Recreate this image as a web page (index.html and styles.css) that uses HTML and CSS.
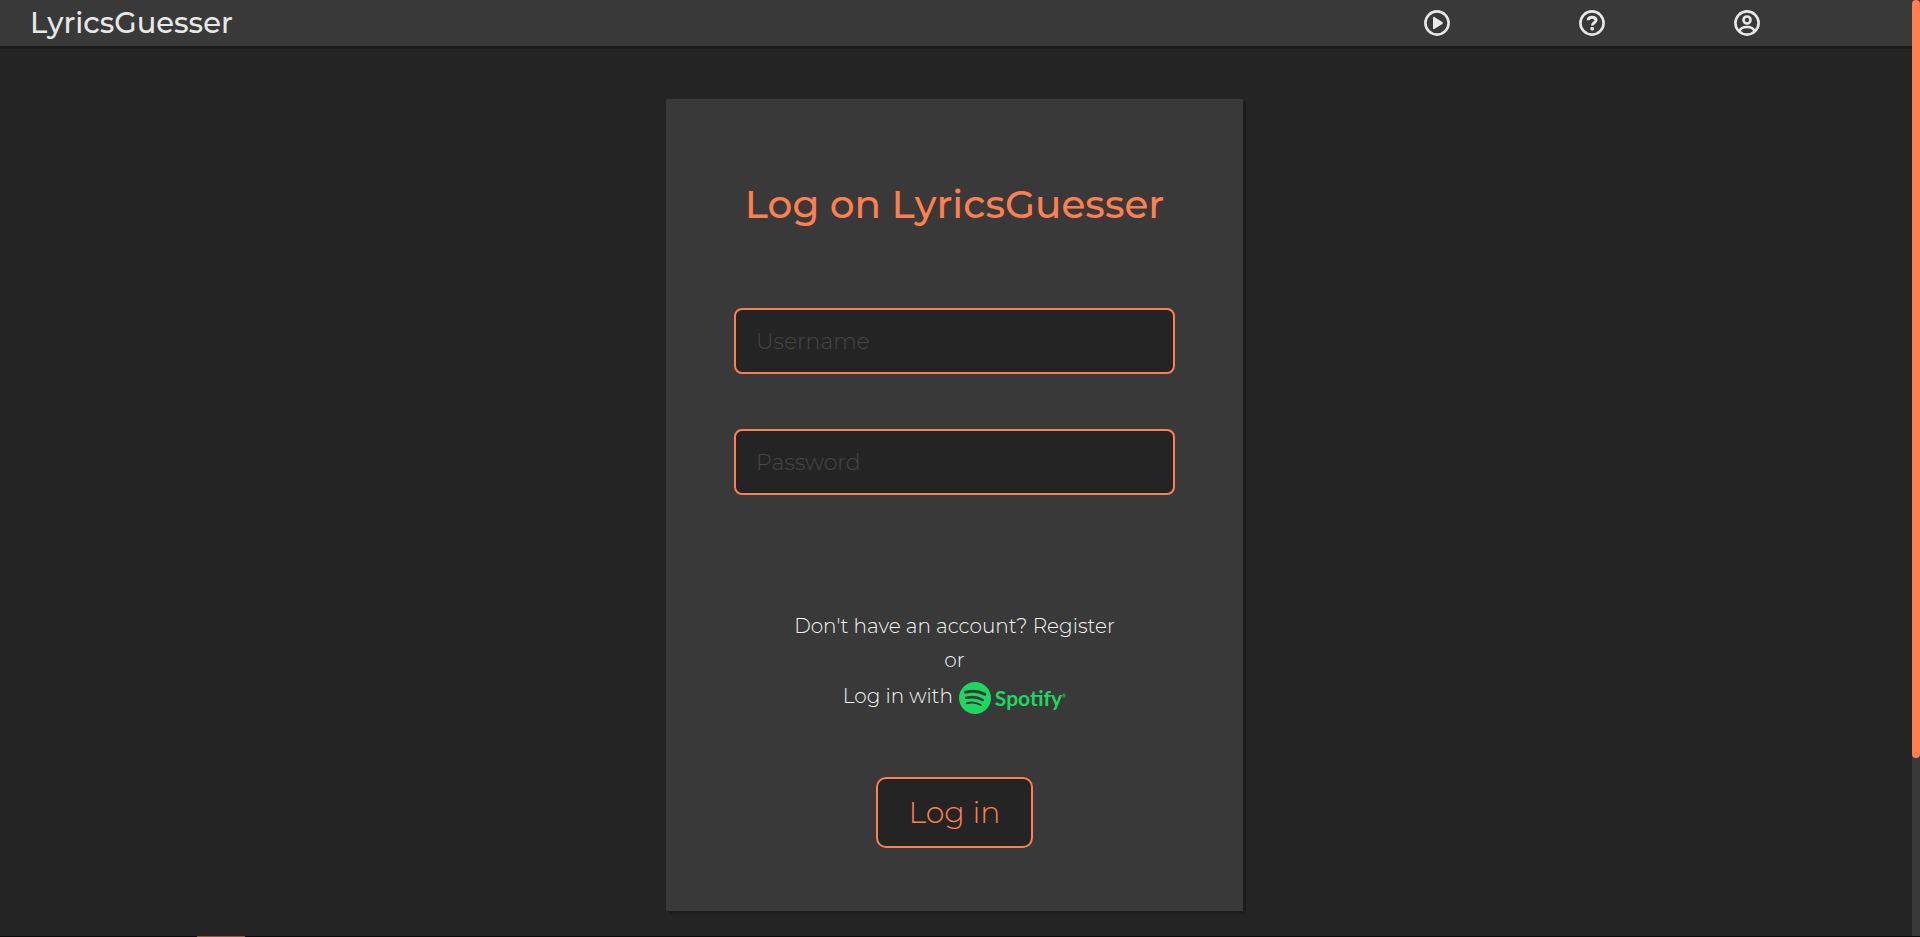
FILE: index.html
```html
<!DOCTYPE html>
<html lang="en">
<head>
<meta charset="utf-8">
<meta name="viewport" content="width=device-width, initial-scale=1">
<title>LyricsGuesser</title>
<link rel="stylesheet" href="styles.css">
</head>
<body>
<div class="screen">
  <div class="page">
    <header class="topbar">
      <a class="brand" href="#">LyricsGuesser</a>
      <nav class="nav" aria-label="Main">
        <a class="nav-link" href="#" aria-label="Play">
          <svg class="icon" viewBox="0 0 26 26"><circle cx="13" cy="13" r="11.6"/><path class="solid" d="M9 7.6c0-.7.7-1 1.300-.7l8 5.200c.7.500.7 1.300 0 1.800l-8 5.200c-.6.300-1.300 0-1.300-.7z"/></svg>
        </a>
        <a class="nav-link" href="#" aria-label="Help">
          <svg class="icon" viewBox="0 0 26 26"><circle cx="13" cy="13" r="11.600"/><path class="hook" d="M9.200 10.200c0-2 1.600-3 3.800-3 2.300 0 4 1.100 4 3 0 2.400-3.600 2.500-3.600 5.300"/><circle class="solid" cx="13.200" cy="18.700" r="1.900"/></svg>
        </a>
        <a class="nav-link" href="#" aria-label="Account">
          <svg class="icon" viewBox="0 0 26 26"><circle cx="13" cy="13" r="11.600"/><circle cx="13" cy="10" r="3.500"/><path d="M5.500 21c1-2.800 3.400-4 7.500-4s6.500 1.200 7.500 4"/></svg>
        </a>
      </nav>
    </header>
    <main class="content">
      <form class="card">
        <h1 class="title">Log on LyricsGuesser</h1>
        <div class="fields">
          <input class="field" type="text" placeholder="Username" aria-label="Username">
          <input class="field" type="password" placeholder="Password" aria-label="Password">
        </div>
        <div class="options">
          <p class="option">Don't have an account? <a class="plain-link" href="#">Register</a></p>
          <p class="option">or</p>
          <a class="spotify-login" href="#">
            <span>Log in with</span>
            <span class="spotify">
              <svg class="spotify-mark" viewBox="0 0 32 32"><circle cx="16" cy="16" r="16"/><path class="wave wave-1" d="M6.500 10.300c6.500-1.800 13.500-1.200 19.300 2"/><path class="wave wave-2" d="M7.200 16c5.700-1.600 11.500-.9 16.500 2"/><path class="wave wave-3" d="M7.800 21.200c4.800-1.200 9.600-.7 13.900 1.800"/></svg>
              <span class="spotify-name">Spotify<sup class="reg">®</sup></span>
            </span>
          </a>
        </div>
        <button class="submit" type="submit">Log in</button>
      </form>
    </main>
  </div>
  <div class="scroll-track"><div class="scroll-thumb"></div></div>
</div>
<div class="edge"><div class="edge-mark"></div></div>
</body>
</html>
```
FILE: styles.css
```css
* { box-sizing: border-box; }
body {
  margin: 0;
  min-height: 100vh;
  display: flex;
  flex-direction: column;
  background: #242424;
  color: #e8e8e8;
  font-family: Montserrat, Inter, sans-serif;
}
a { color: inherit; text-decoration: none; }
.screen { flex: 1; display: flex; }
.page { flex: 1; min-width: 0; }
.topbar {
  display: flex;
  align-items: center;
  justify-content: space-between;
  height: 46px;
  padding: 0 88px 0 30px;
  background: #393939;
  box-shadow: 0 3px 0 #1c1c1c;
}
.brand { font-size: 29px; font-weight: 500; line-height: 46px; }
.nav { display: flex; }
.nav-link { display: flex; justify-content: center; width: 155px; }
.icon {
  width: 26px;
  height: 26px;
  fill: none;
  stroke: #e8e8e8;
  stroke-width: 2.6;
}
.icon .solid { fill: #e8e8e8; stroke: none; }
.icon .hook { stroke-width: 3; }
.content { display: flex; justify-content: center; padding: 53px 19px 25px 16px; }
.card {
  display: flex;
  flex-direction: column;
  align-items: center;
  width: 577px;
  max-width: 100%;
  padding: 81px 68px 63px;
  background: #393939;
  box-shadow: 3px 3px 0 #1c1c1c;
}
.title {
  margin: 0 0 80px;
  color: #ff7f50;
  font-size: 39px;
  font-weight: 500;
  line-height: 48px;
  white-space: nowrap;
}
.fields { display: flex; flex-direction: column; gap: 55px; width: 100%; }
.field {
  width: 100%;
  height: 66px;
  padding: 0 20px;
  border: 2px solid #ff7f50;
  border-radius: 8px;
  background: #242424;
  color: #e8e8e8;
  font: 300 22px Montserrat, Inter, sans-serif;
}
.field::placeholder { color: #464646; opacity: 1; }
.options {
  display: flex;
  flex-direction: column;
  align-items: center;
  margin: 114px 0 62px;
  color: #f8f8f8;
  font-size: 20px;
  font-weight: 300;
  line-height: 34px;
}
.option { margin: 0; }
.spotify-login { display: flex; align-items: center; gap: 6px; height: 38px; }
.spotify { display: flex; align-items: center; gap: 4px; padding-top: 4px; color: #1ed760; }
.spotify-mark { width: 32px; height: 32px; fill: #1ed760; }
.wave { fill: none; stroke: #393939; stroke-linecap: round; }
.wave-1 { stroke-width: 3; }
.wave-2 { stroke-width: 2.6; }
.wave-3 { stroke-width: 2; }
.spotify-name { font-family: Lato, sans-serif; font-size: 21px; font-weight: 700; line-height: 32px; }
.reg { font-size: 5px; font-weight: 400; line-height: 0; }
.submit {
  height: 71px;
  padding: 0 30px;
  border: 2px solid #ff7f50;
  border-radius: 10px;
  background: #242424;
  color: #ff7f50;
  font: 300 30px Montserrat, Inter, sans-serif;
}
.scroll-track { width: 8px; background: #393939; }
.scroll-thumb { height: 81%; border-radius: 4px; background: #ff7f50; }
.edge { height: 1px; padding-left: 197px; background: #0a0a0a; }
.edge-mark { width: 48px; height: 1px; background: #94592e; }
```
